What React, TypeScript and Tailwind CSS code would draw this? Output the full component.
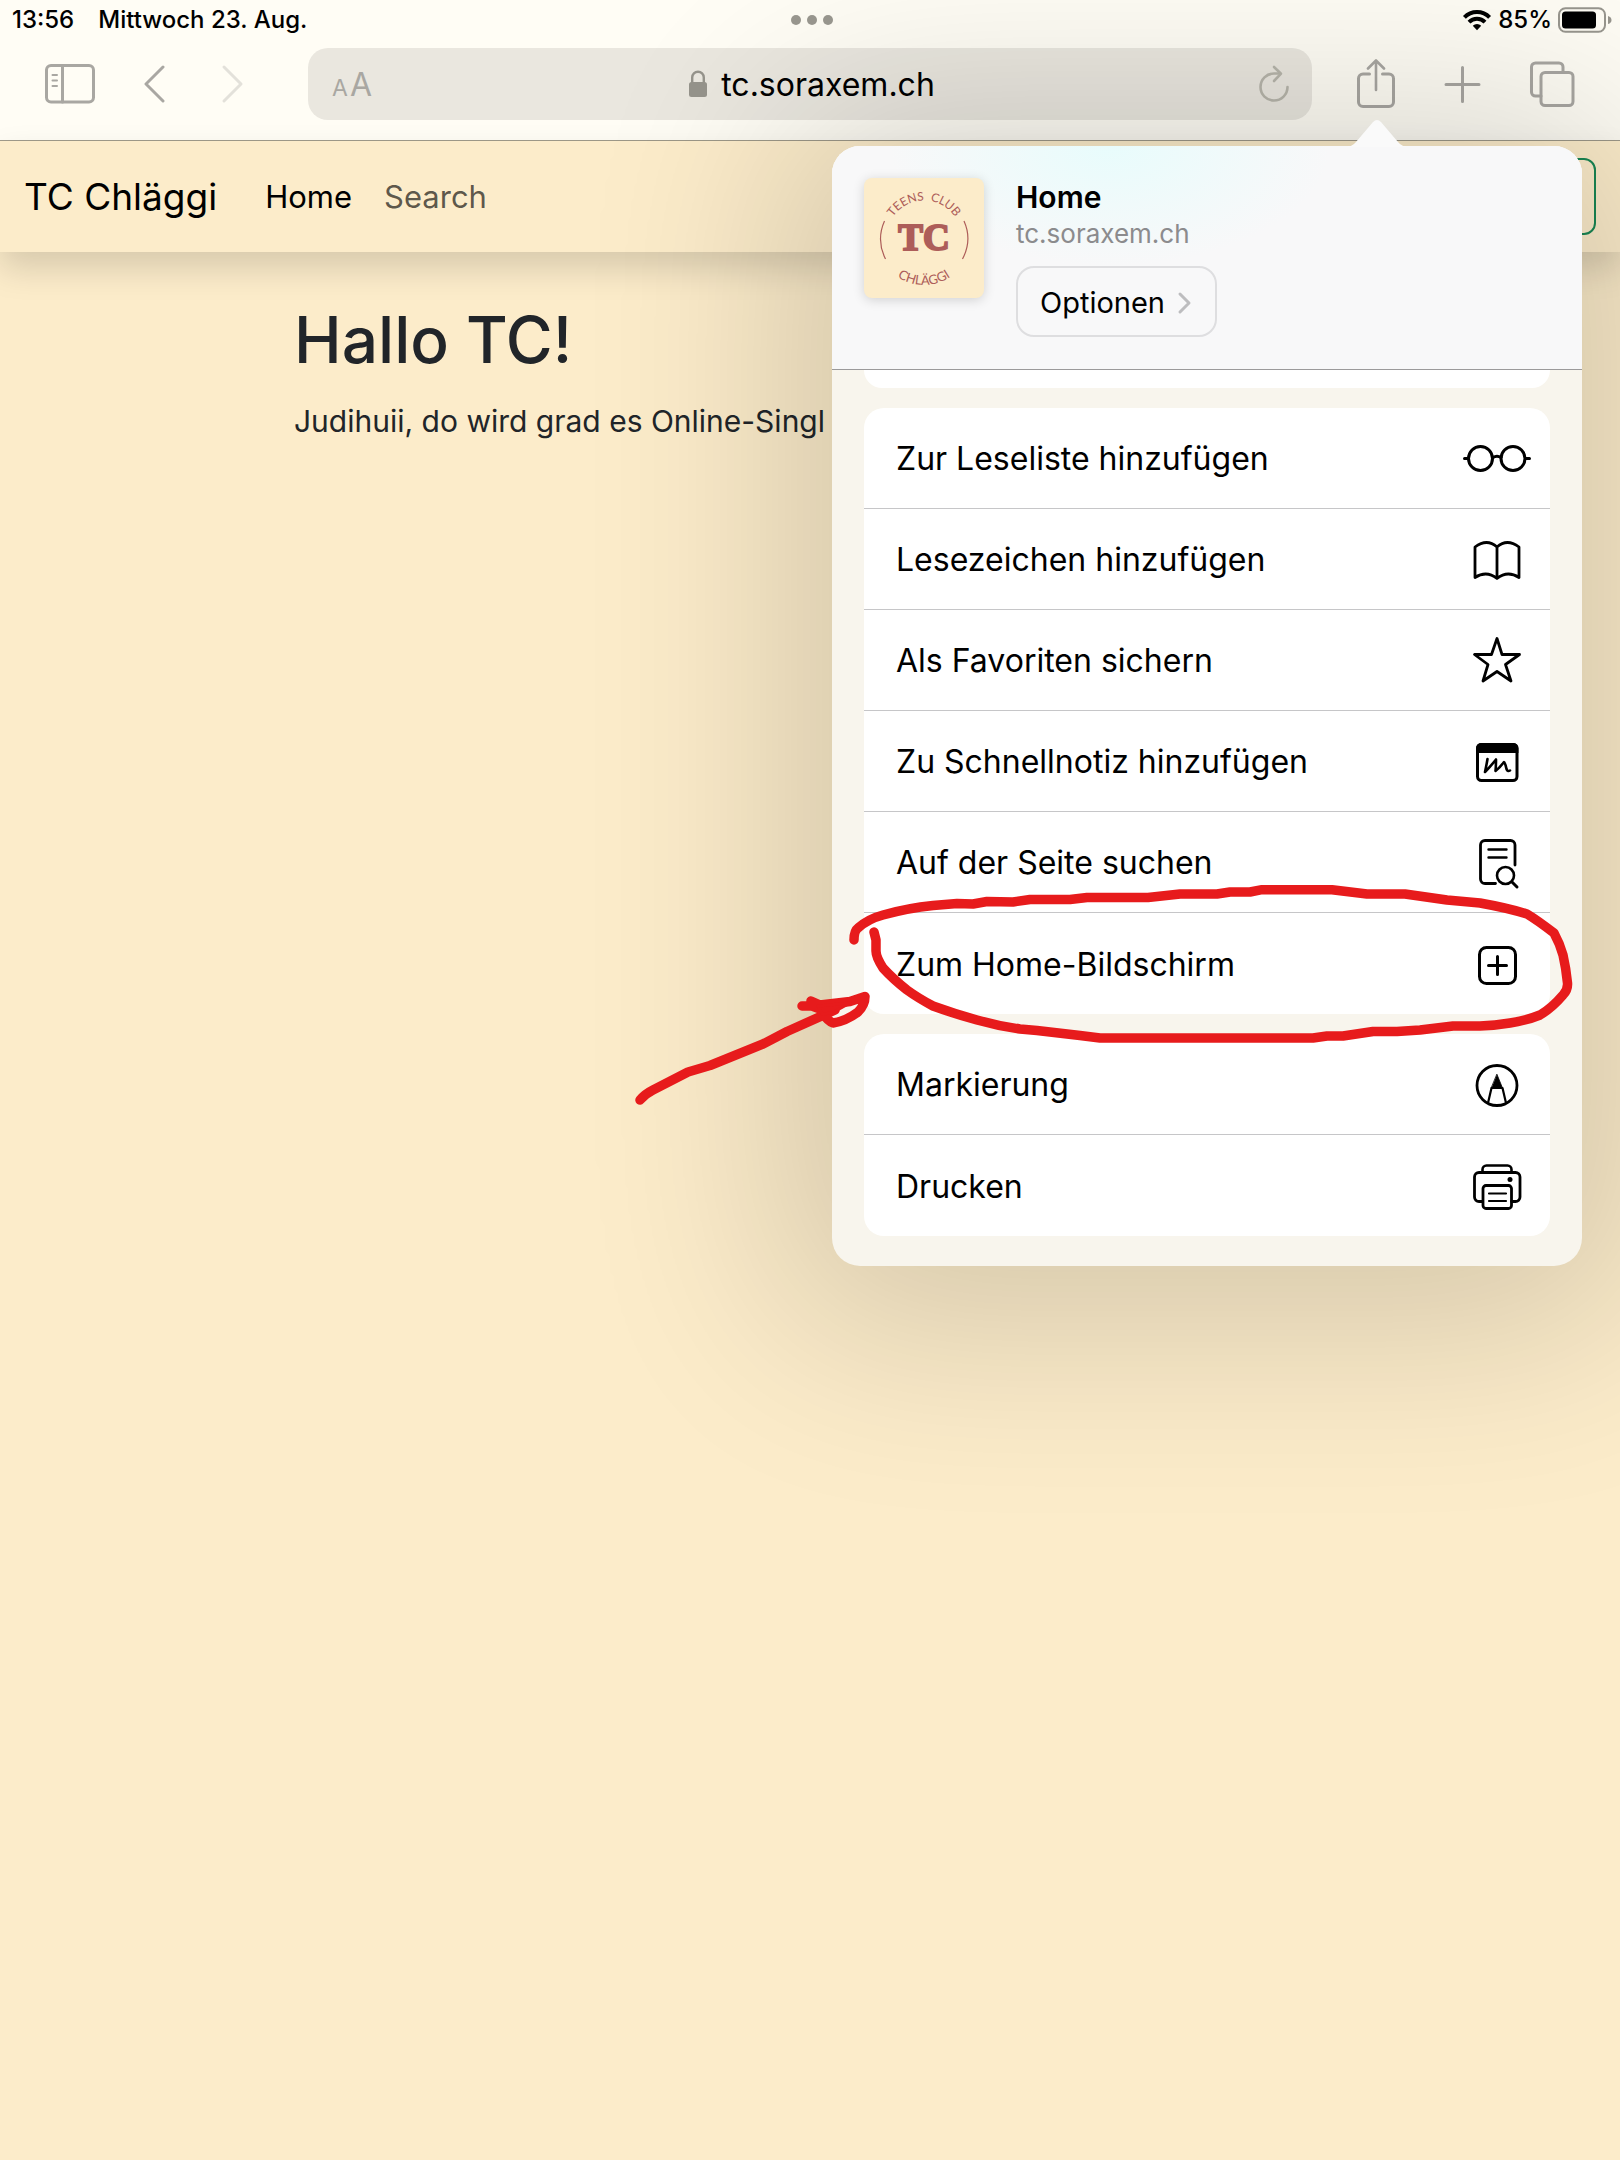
import type { ReactNode, SVGProps } from 'react';

function Icon({ children, ...props }: SVGProps<SVGSVGElement> & { children: ReactNode }) {
  return (
    <svg
      fill="none"
      stroke="currentColor"
      strokeWidth={3}
      strokeLinecap="round"
      strokeLinejoin="round"
      aria-hidden="true"
      {...props}
    >
      {children}
    </svg>
  );
}

function StatusBar() {
  return (
    <div className="grid h-10 grid-cols-3 items-center pl-3 pr-2 text-2xl font-medium leading-10 text-black">
      <div className="flex gap-6">
        <span>13:56</span>
        <span>Mittwoch 23. Aug.</span>
      </div>
      <div className="flex justify-center gap-1.5">
        <span className="size-2.5 rounded-full bg-[#9a9890]" />
        <span className="size-2.5 rounded-full bg-[#9a9890]" />
        <span className="size-2.5 rounded-full bg-[#9a9890]" />
      </div>
      <div className="flex items-center justify-end gap-1.5">
        <Icon width="30" height="22" viewBox="0 0 30 22" strokeWidth={4} strokeLinecap="butt">
          <path d="M2.4 8.4a17.6 17.6 0 0 1 25.2 0" />
          <path d="M7 13.2a11.2 11.2 0 0 1 16 0" />
          <path d="M15 21.2l-4.2-4.4a6 6 0 0 1 8.4 0z" fill="currentColor" stroke="none" />
        </Icon>
        <span>85%</span>
        <Icon width="54" height="26" viewBox="0 0 54 26">
          <rect x="1" y="1.2" width="46" height="23.6" rx="6.5" stroke="#98968e" strokeWidth={2} />
          <rect x="4" y="4.5" width="34" height="17" rx="3.5" fill="currentColor" stroke="none" />
          <path d="M50 9q3.500 1 3.500 4t-3.500 4z" fill="#98968e" stroke="none" />
        </Icon>
      </div>
    </div>
  );
}

function Toolbar() {
  return (
    <div className="flex h-[101px] items-start border-b border-[#a09b8b] pt-2 text-[#a9a7a2]">
      <div className="flex h-[72px] w-[308px] shrink-0 items-center gap-12 pl-11">
        <button type="button" aria-label="Seitenleiste">
          <Icon width="52" height="42" viewBox="0 0 52 42">
            <rect x="2.500" y="2.500" width="47" height="36.500" rx="4.500" />
            <path d="M18.500 3v36" />
            <path d="M8.500 12h4.500M8.500 17.500h4.500M8.500 23h4.500" strokeWidth={2} />
          </Icon>
        </button>
        <button type="button" aria-label="Zurück">
          <Icon width="24" height="44" viewBox="0 0 24 44">
            <path d="M19 5L2 22l17 17" />
          </Icon>
        </button>
        <button type="button" aria-label="Vorwärts" className="text-[#e3e1da]">
          <Icon width="28" height="44" viewBox="0 0 28 44">
            <path d="M8 5l17 17L8 39" />
          </Icon>
        </button>
      </div>
      <div className="flex h-[72px] min-w-0 flex-1 items-center justify-between rounded-[20px] bg-[#eae7df] pl-6 pr-5">
        <button type="button" aria-label="Darstellung" className="flex w-12 items-baseline gap-0.5 pt-0.5 leading-none">
          <span className="text-[23px]">A</span>
          <span className="text-[32px]">A</span>
        </button>
        <div className="flex items-center gap-3.5">
          <svg width="18" height="28" viewBox="0 0 18 28" fill="none" aria-hidden="true">
            <path d="M3.200 13V7.500a5.800 5.800 0 0 1 11.600 0V13" stroke="#96948c" strokeWidth={2.4} />
            <rect y="12" width="18" height="15" rx="2.500" fill="#96948c" />
          </svg>
          <span className="pt-0.5 text-[32px] leading-10 text-black">tc.soraxem.ch</span>
        </div>
        <button type="button" aria-label="Neu laden" className="flex w-12 justify-end text-[#b7b5ab]">
          <Icon width="34" height="42" viewBox="2 0 34 42" strokeWidth={2.6}>
            <path d="M31.500 24a13.500 13.500 0 1 1-13.500-13.500h6" />
            <path d="M18 4l7 6.700-7 7.300" />
          </Icon>
        </button>
      </div>
      <div className="flex h-[72px] w-[308px] shrink-0 items-center gap-[45px] pl-[42px]">
        <button type="button" aria-label="Teilen">
          <Icon width="44" height="50" viewBox="0 0 44 50">
            <path d="M15.500 15H9a4.500 4.500 0 0 0-4.500 4.500v23.500A4.500 4.500 0 0 0 9 47.500h26a4.500 4.500 0 0 0 4.500-4.500V19.500A4.500 4.500 0 0 0 35 15h-6.500" />
            <path d="M22 31V2M14 9.500l8-8 8 8" strokeWidth={2.6} />
          </Icon>
        </button>
        <button type="button" aria-label="Neuer Tab">
          <Icon width="40" height="40" viewBox="0 0 40 40">
            <path d="M19.500 3.500v34M3 20.500h33" />
          </Icon>
        </button>
        <button type="button" aria-label="Tabs">
          <Icon width="48" height="48" viewBox="0 0 48 48">
            <rect x="13" y="12.500" width="32" height="33" rx="4" />
            <path d="M13 36H7.500A4 4 0 0 1 3.500 32V7A4 4 0 0 1 7.500 3H31a4 4 0 0 1 4 4v5.500" />
          </Icon>
        </button>
      </div>
    </div>
  );
}

function SiteNav() {
  return (
    <nav className="flex h-[111px] items-center bg-[#fcecca] px-6 shadow-[0_16px_32px_rgba(0,0,0,0.15)]">
      <a href="#" className="mr-12 text-[37px] leading-[60px] text-black">
        TC Chläggi
      </a>
      <a href="#home" className="mr-8 text-[31px] leading-[48px] text-black">
        Home
      </a>
      <a href="#search" className="text-[31px] leading-[48px] text-black/65">
        Search
      </a>
      <button
        type="button"
        aria-label="Suchen"
        className="ml-auto h-[77px] w-[150px] rounded-xl border-2 border-[#198754]"
      />
    </nav>
  );
}

function SiteLogo() {
  return (
    <svg
      width="120"
      height="120"
      viewBox="0 0 120 120"
      className="shrink-0 rounded-lg bg-[#fcecca] shadow-[0_2px_12px_rgba(0,0,0,0.16)]"
      role="img"
      aria-label="Teens Club Chläggi"
    >
      <defs>
        <path id="logo-top" d="M22.500 60a37.500 37.500 0 0 1 75 0" />
        <path id="logo-bottom" d="M13 60a47 47 0 0 0 94 0" />
      </defs>
      <g fill="#ad5d59" fontFamily="Lato, sans-serif" fontSize="12" textAnchor="middle">
        <text>
          <textPath href="#logo-top" startOffset="50%">
            TEENS&#160;&#160;CLUB
          </textPath>
        </text>
        <text fontSize="13">
          <textPath href="#logo-bottom" startOffset="50%">
            CHLÄGGI
          </textPath>
        </text>
        <text x="60" y="72" fontFamily="Liberation Serif, serif" fontWeight="700" fontSize="37" stroke="#ad5d59" strokeWidth="2">
          TC
        </text>
      </g>
      <path d="M20.500 43q-8.500 19 1 38M100 43q8.500 19-1.500 38" fill="none" stroke="#ad5d59" strokeWidth="1.200" />
    </svg>
  );
}

const icons = {
  glasses: (
    <>
      <circle cx="18.500" cy="30.500" r="12" />
      <circle cx="51" cy="30.500" r="12" />
      <path d="M31 29.500q4-2.500 8 0M2.500 30.500h4M63.500 30.500h4" />
    </>
  ),
  book: (
    <path d="M35 18Q25 9 13 18v30.500q11.500-7.500 22 1q10.500-8.500 22-1V18Q45 9 35 18zM35 18v31" strokeWidth={2.800} />
  ),
  star: <path d="M35 8.500l5 16h17.500L43.500 34.500l5.500 16.500L35 41.500L21 51l5-16.500L12.500 24.500h17z" strokeWidth={2.800} />,
  note: (
    <>
      <rect x="15.500" y="13.500" width="39.500" height="36" rx="4" />
      <path d="M14.100 22v-5a5 5 0 0 1 5-5h32.300a5 5 0 0 1 5 5v5z" fill="currentColor" stroke="none" />
      <path d="M25.500 28q-1 6-2.500 13q5-5 11-12.500q0 7-.5 11.500q4-3 8.500-9q1 0 2.500 7q1 3 3.500 1.500" strokeWidth={2.600} />
    </>
  ),
  find: (
    <>
      <path d="M33.500 51.500H23a4.500 4.500 0 0 1-4.500-4.500V13a4.500 4.500 0 0 1 4.500-4.500h25.500a4.500 4.500 0 0 1 4.500 4.500v20" strokeWidth={2.800} />
      <path d="M26.500 17.500h18M26.500 25.500h18" strokeWidth={2.400} />
      <circle cx="43.500" cy="43.500" r="8.500" strokeWidth={2.600} />
      <path d="M50 50l5 5" />
    </>
  ),
  add: (
    <>
      <rect x="17.500" y="13.500" width="36" height="36" rx="7" />
      <path d="M35.500 22.500v18M26.500 31.500h18" />
    </>
  ),
  markup: (
    <>
      <circle cx="35" cy="31.500" r="20" strokeWidth={2.800} />
      <path d="M35 20.500l5.500 13.500h-11z" fill="currentColor" strokeWidth={0.800} />
      <path d="M29.500 34l-3.500 15M40.500 34l3.500 15M29.500 34h11" strokeWidth={2.200} />
    </>
  ),
  print: (
    <>
      <path d="M20.500 16.500v-3a4 4 0 0 1 4-4h21a4 4 0 0 1 4 4v3" strokeWidth={2.600} />
      <path d="M20.500 45.500H17a4.500 4.500 0 0 1-4.500-4.500V21a4.500 4.500 0 0 1 4.500-4.500h36.500A4.500 4.500 0 0 1 58 21v20a4.500 4.500 0 0 1-4.500 4.500h-4" strokeWidth={2.800} />
      <rect x="21" y="29.500" width="28.500" height="23" rx="3" strokeWidth={2.800} />
      <path d="M27 37.500h17M27 45h17" strokeWidth={2.200} />
      <circle cx="48" cy="23.500" r="2.500" fill="currentColor" stroke="none" />
    </>
  ),
};

type Action = { label: string; icon: keyof typeof icons };

const pageActions: Action[] = [
  { label: 'Zur Leseliste hinzufügen', icon: 'glasses' },
  { label: 'Lesezeichen hinzufügen', icon: 'book' },
  { label: 'Als Favoriten sichern', icon: 'star' },
  { label: 'Zu Schnellnotiz hinzufügen', icon: 'note' },
  { label: 'Auf der Seite suchen', icon: 'find' },
  { label: 'Zum Home-Bildschirm', icon: 'add' },
];

const outputActions: Action[] = [
  { label: 'Markierung', icon: 'markup' },
  { label: 'Drucken', icon: 'print' },
];

function ActionGroup({ actions }: { actions: Action[] }) {
  return (
    <ul className="overflow-hidden rounded-[20px] bg-white">
      {actions.map((action) => (
        <li key={action.label} className="h-[101px] border-b border-[#c6c6c8] last:border-b-0">
          <button type="button" className="flex h-full w-full items-center justify-between pl-8 pr-[18px] text-left">
            <span className="pt-0.5 text-[32px] leading-10">{action.label}</span>
            <Icon width="70" height="60" viewBox="0 0 70 60">
              {icons[action.icon]}
            </Icon>
          </button>
        </li>
      ))}
    </ul>
  );
}

function Annotation() {
  return (
    <svg
      className="pointer-events-none absolute -left-[232px] top-[714px]"
      width="1000"
      height="260"
      viewBox="600 860 1000 260"
      fill="none"
      stroke="#e71b1c"
      strokeWidth={9.5}
      strokeLinecap="round"
      strokeLinejoin="round"
      aria-hidden="true"
    >
      <path d="M854 940Q854 931 858 928Q868 919 883 915Q908 908 933 905.500L957 903.500L973 904L987 901.500L1013 902L1030 899.500L1070 899.500L1087 897.500L1148 897.500L1180 894L1217 894L1230 892L1250 892L1262 889.700L1332 889.700L1367 894L1405 894L1447 900L1480 903Q1508 908 1527 914Q1537 920 1554 933Q1560 944 1563 955Q1566 968 1567.500 983Q1568 990 1563 995Q1552 1008 1540 1015Q1528 1020 1510 1023Q1495 1025.500 1480 1026L1453 1026L1420 1030L1397 1031.500L1373 1031.500L1343 1036L1327 1036L1313 1038L1100 1038L1080 1035.500L1037 1030.500L1020 1029Q998 1026 977 1020Q955 1014 933 1006Q918 998 907 990Q893 979 883 968Q876 957 876 951L876 940L874 932" />
      <path d="M640 1100Q645 1094 653 1090L688 1072L710 1065.500L763 1044L787 1031.500L835 1010" />
      <path d="M802 1006L812 1006L811 1001L820 1005L850 1001.500L865 996.500Q865 1005 858 1012Q846 1021 833 1023Q826 1020 820 1009L812 1006" />
      <path d="M818 1006L850 1003L832 1013L822 1014z" fill="#e71b1c" strokeWidth={3} />
    </svg>
  );
}

function SharePopover() {
  return (
    <section
      aria-label="Teilen"
      className="absolute right-[38px] top-[146px] w-[750px] rounded-[28px] bg-[#f8f5ed] text-black shadow-[0_10px_200px_50px_rgba(0,0,0,0.16)]"
    >
      <svg className="absolute -top-[26px] right-[171px]" width="68" height="27" viewBox="0 0 68 27" aria-hidden="true">
        <path d="M2 27q7 0 11-5L30 2q4-4 8 0l17 20q4 5 11 5z" fill="#fafafa" />
      </svg>
      <header className="flex h-[224px] gap-8 rounded-t-[28px] border-b border-[#9b9a9b] bg-[#f8f8f9] bg-[radial-gradient(ellipse_220px_120px_at_37%_0%,#e8fcfc_0%,#f8f8f9_100%)] px-8 pt-8">
        <SiteLogo />
        <div className="flex flex-col items-start">
          <h2 className="text-3xl font-semibold leading-[38px]">Home</h2>
          <p className="text-[26px] leading-9 text-[#8b8b8d]">tc.soraxem.ch</p>
          <button
            type="button"
            className="mt-3.5 flex h-[71px] items-center gap-3 rounded-[18px] border-2 border-[#dedee0] px-[22px] pt-0.5 text-[29px]"
          >
            Optionen
            <Icon width="16" height="24" viewBox="0 0 16 24" stroke="#bdbdbf">
              <path d="M3 3l9 9-9 9" />
            </Icon>
          </button>
        </div>
      </header>
      <div className="flex flex-col gap-5 px-8 pb-[30px]">
        <div className="h-[18px] rounded-b-[20px] bg-white" />
        <ActionGroup actions={pageActions} />
        <ActionGroup actions={outputActions} />
      </div>
      <Annotation />
    </section>
  );
}

export default function App() {
  return (
    <div className="relative min-h-screen overflow-hidden bg-[#fcecca] font-[Inter,sans-serif]">
      <header className="bg-[#fffdf5]">
        <StatusBar />
        <Toolbar />
      </header>
      <SiteNav />
      <main className="mx-auto max-w-[1080px] px-6 pt-12 text-[#212529]">
        <h1 className="text-[64px] font-medium leading-[80px]">Hallo TC!</h1>
        <p className="mt-4 whitespace-nowrap text-3xl leading-[50px]">Judihuii, do wird grad es Online-Singl</p>
      </main>
      <SharePopover />
    </div>
  );
}
